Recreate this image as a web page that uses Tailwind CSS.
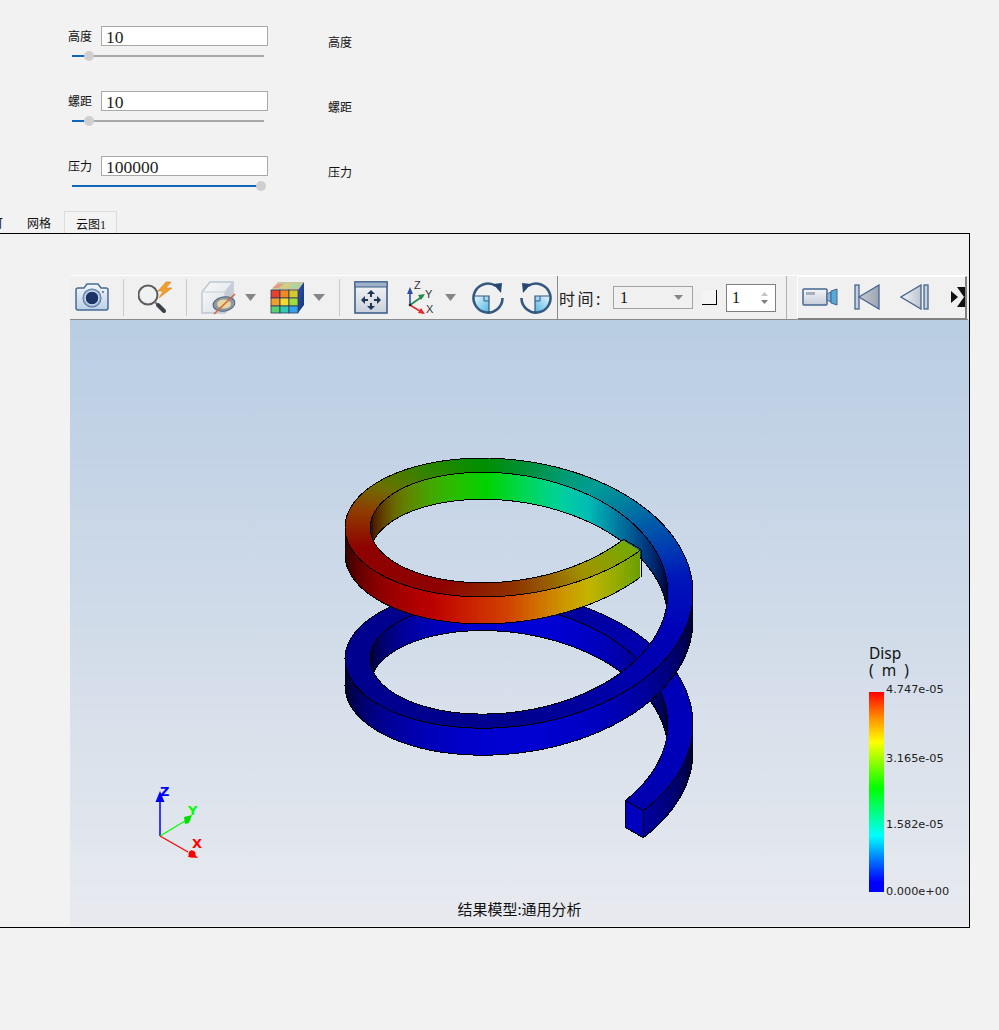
<!DOCTYPE html>
<html lang="zh">
<head>
<meta charset="utf-8">
<script src="https://cdn.jsdelivr.net/npm/@tailwindcss/browser@4"></script>
</head>
<body class="bg-[#f2f2f2]">
<div class="w-[999px] h-[1030px] overflow-hidden bg-[#f2f2f2] font-['Noto_Sans_CJK_SC','Liberation_Sans',sans-serif] text-[#111]">

  <!-- parameter form -->
  <div class="h-[211px] pt-[26px] pl-[68px] flex flex-col">
    <div class="h-[65px] flex">
      <div class="w-[200px]">
        <div class="flex items-center h-[20px]">
          <span class="w-[33px] text-[12px] leading-[20px]">高度</span>
          <div class="w-[167px] h-[20px] bg-white border border-[#a9a9a9] pl-[4px] font-['Liberation_Serif',serif] text-[17.500px] leading-[20px] text-[#222]">10</div>
        </div>
        <div class="relative mt-[8px] ml-[4px] w-[192px] h-[4px]">
          <div class="absolute left-0 top-[1px] w-[192px] h-[2px] bg-[#a9a9a9]"></div>
          <div class="absolute left-0 top-[1px] w-[14px] h-[2px] bg-[#0f67b8]"></div>
          <div class="absolute left-[12px] -top-[3px] w-[10px] h-[10px] rounded-full bg-[#cfcfcf]"></div>
        </div>
      </div>
      <span class="ml-[60px] mt-[6px] text-[12px] leading-[20px]">高度</span>
    </div>
    <div class="h-[65px] flex">
      <div class="w-[200px]">
        <div class="flex items-center h-[20px]">
          <span class="w-[33px] text-[12px] leading-[20px]">螺距</span>
          <div class="w-[167px] h-[20px] bg-white border border-[#a9a9a9] pl-[4px] font-['Liberation_Serif',serif] text-[17.500px] leading-[20px] text-[#222]">10</div>
        </div>
        <div class="relative mt-[8px] ml-[4px] w-[192px] h-[4px]">
          <div class="absolute left-0 top-[1px] w-[192px] h-[2px] bg-[#a9a9a9]"></div>
          <div class="absolute left-0 top-[1px] w-[14px] h-[2px] bg-[#0f67b8]"></div>
          <div class="absolute left-[12px] -top-[3px] w-[10px] h-[10px] rounded-full bg-[#cfcfcf]"></div>
        </div>
      </div>
      <span class="ml-[60px] mt-[6px] text-[12px] leading-[20px]">螺距</span>
    </div>
    <div class="h-[55px] flex">
      <div class="w-[200px]">
        <div class="flex items-center h-[20px]">
          <span class="w-[33px] text-[12px] leading-[20px]">压力</span>
          <div class="w-[167px] h-[20px] bg-white border border-[#a9a9a9] pl-[4px] font-['Liberation_Serif',serif] text-[17.500px] leading-[20px] text-[#222]">100000</div>
        </div>
        <div class="relative mt-[8px] ml-[4px] w-[192px] h-[4px]">
          <div class="absolute left-0 top-[1px] w-[186px] h-[2px] bg-[#0f67b8]"></div>
          <div class="absolute left-[184px] -top-[3px] w-[10px] h-[10px] rounded-full bg-[#cfcfcf]"></div>
        </div>
      </div>
      <span class="ml-[60px] mt-[6px] text-[12px] leading-[20px]">压力</span>
    </div>
  </div>

  <!-- tabs -->
  <div class="h-[22px] flex items-end">
    <span class="-ml-[9px] w-[12px] h-[22px] text-[12px] leading-[24px] overflow-hidden">可</span>
    <span class="ml-[24px] w-[24px] h-[22px] text-[12px] leading-[24px]">网格</span>
    <div class="ml-[13px] w-[53px] h-[22px] bg-[#f3f3f3] border border-b-0 border-[#dcdcdc] pl-[11px] text-[12px] leading-[23px]">云图<span class="font-['Liberation_Serif',serif]">1</span></div>
  </div>

  <!-- frame -->
  <div class="-ml-px w-[971px] h-[695px] border border-black pt-[41px] pl-[70px] bg-[#f2f2f2]">
    <!-- toolbar -->
    <div class="w-[898px] h-[45px] flex items-center border-t border-t-white border-b border-b-[#8a8a8a] bg-[#f0f0f0]">
      <svg class="ml-[5px] shrink-0" width="34" height="34" viewBox="0 0 34 34"><defs><linearGradient id="g1" x1="0" y1="0" x2="0" y2="1"><stop offset="0" stop-color="#f2f6fb"/><stop offset="1" stop-color="#bdd0e6"/></linearGradient><radialGradient id="g2"><stop offset="0" stop-color="#1d3566"/><stop offset=".62" stop-color="#1d3566"/><stop offset=".7" stop-color="#cfe0f2"/><stop offset=".85" stop-color="#8fa9c8"/><stop offset="1" stop-color="#3d5c86"/></radialGradient></defs><path d="M3 7h6l3-4h11l3 4h5a2 2 0 0 1 2 2v18a2 2 0 0 1-2 2H3a2 2 0 0 1-2-2V9a2 2 0 0 1 2-2z" fill="url(#g1)" stroke="#476a95" stroke-width="1.500"/><circle cx="17" cy="17" r="9.500" fill="url(#g2)"/><circle cx="28" cy="11" r="1" fill="#476a95"/></svg>
      <div class="ml-[14px] w-px h-[37px] bg-[#cbcbcb] shrink-0"></div>
      <svg class="ml-[14px] shrink-0" width="36" height="34" viewBox="0 0 36 34"><circle cx="10" cy="14" r="9.500" fill="#eff1f3" stroke="#5d5d5d" stroke-width="2"/><path d="M17 21l2 2" stroke="#777" stroke-width="2"/><path d="M20 24l6 6" stroke="#3a3f48" stroke-width="4" stroke-linecap="round"/><path d="M28 1L20 10h5l-4 7 13-10h-6l5-6z" fill="#f0a02e" stroke="#d98518" stroke-width=".6"/></svg>
      <div class="ml-[12px] w-px h-[37px] bg-[#cbcbcb] shrink-0"></div>
      <svg class="ml-[14px] shrink-0" width="35" height="34" viewBox="0 0 35 34"><defs><linearGradient id="g3" x1="0" y1="0" x2="1" y2="1"><stop offset="0" stop-color="#fafafa"/><stop offset="1" stop-color="#d7dde6"/></linearGradient></defs><path d="M1 11L9 1h23v22l-8 9H1z" fill="url(#g3)" stroke="#bcc6d2" stroke-width="1.400"/><path d="M1 11h23v21M24 11l8-10" fill="none" stroke="#c5ced9" stroke-width="1.200"/><path d="M24 11l8-10v22l-8 9z" fill="#c5ccd6"/><ellipse cx="23" cy="23" rx="11" ry="7" fill="#8d99a8" stroke="#52657d" stroke-width="1" transform="rotate(-10 23 23)"/><ellipse cx="23" cy="23" rx="7" ry="4.500" fill="#e8d7a0"/><path d="M13 33L34 13" stroke="#d8653a" stroke-width="1.600"/></svg>
      <svg class="ml-[9px] shrink-0" width="11" height="7" viewBox="0 0 11 7"><path d="M0 0h11L5.500 7z" fill="#858585"/></svg>
      <svg class="ml-[14px] shrink-0" width="35" height="34" viewBox="0 0 35 34"><defs><linearGradient id="g10" x1="0" y1="0" x2="1" y2="1"><stop offset="0" stop-color="#2c56a8"/><stop offset="1" stop-color="#16307a"/></linearGradient></defs><path d="M8 1h26l-6 8H1z" fill="#c8c89a"/><path d="M7.500 3h6l-5 4h-6z" fill="#e49a80"/><path d="M15 3h7l-5 4h-7z" fill="#d5cf7f"/><path d="M24 3h7l-4 4h-7z" fill="#a6d8a0"/><path d="M28 9l6-8v23l-6 8z" fill="url(#g10)"/><g stroke="#2a3a5c" stroke-width=".8"><rect x="1" y="9" width="9" height="8" fill="#e8402c"/><rect x="10" y="9" width="9" height="8" fill="#ef8a23"/><rect x="19" y="9" width="9" height="8" fill="#d8c830"/><rect x="1" y="17" width="9" height="8" fill="#f0a02a"/><rect x="10" y="17" width="9" height="8" fill="#f5d830"/><rect x="19" y="17" width="9" height="8" fill="#9fdc3c"/><rect x="1" y="25" width="9" height="7" fill="#58cf70"/><rect x="10" y="25" width="9" height="7" fill="#35c8b0"/><rect x="19" y="25" width="9" height="7" fill="#38a0e8"/></g></svg>
      <svg class="ml-[8px] shrink-0" width="12" height="7" viewBox="0 0 12 7"><path d="M0 0h12L6 7z" fill="#858585"/></svg>
      <div class="ml-[14px] w-px h-[37px] bg-[#cbcbcb] shrink-0"></div>
      <svg class="ml-[14px] shrink-0" width="34" height="34" viewBox="0 0 34 34"><defs><linearGradient id="g4" x1="0" y1="0" x2="0" y2="1"><stop offset="0" stop-color="#f6f6f8"/><stop offset="1" stop-color="#c9d0dc"/></linearGradient></defs><rect x="1" y="1" width="32" height="31" fill="url(#g4)" stroke="#3e5f88" stroke-width="1.600"/><rect x="1" y="1" width="32" height="5" fill="#9fb2cb" stroke="#3e5f88" stroke-width="1"/><g fill="#20354f"><path d="M17 9l4 4h-3v3h-2v-3h-3z"/><path d="M17 29l4-4h-3v-3h-2v3h-3z"/><path d="M7 19l4-4v3h3v2h-3v3z"/><path d="M27 19l-4-4v3h-3v2h3v3z"/></g></svg>
      <svg class="ml-[16px] shrink-0" width="34" height="34" viewBox="0 0 34 34"><path d="M6 24V8" stroke="#2d4fa3" stroke-width="1.600"/><path d="M6 6l3 7H3z" fill="#2d4fa3"/><path d="M6 24l13-9" stroke="#1f8a4a" stroke-width="1.600"/><path d="M21 13l-7 1 3 5z" fill="#1f8a4a"/><path d="M6 24l13 8" stroke="#df2b2b" stroke-width="1.600"/><path d="M21 33l-7-1 3-5z" fill="#df2b2b"/><circle cx="6" cy="24" r="1.300" fill="#222"/><text x="10" y="8" font-family="Liberation Sans" font-size="11" fill="#333">Z</text><text x="21" y="17" font-family="Liberation Sans" font-size="11" fill="#333">Y</text><text x="22" y="32" font-family="Liberation Sans" font-size="11" fill="#333">X</text></svg>
      <svg class="ml-[7px] shrink-0" width="11" height="7" viewBox="0 0 11 7"><path d="M0 0h11L5.500 7z" fill="#858585"/></svg>
      <svg class="ml-[15px] shrink-0" width="34" height="34" viewBox="0 0 34 34"><defs><linearGradient id="g5" x1="0" y1="0" x2="1" y2="1"><stop offset="0" stop-color="#eaf6fd"/><stop offset="1" stop-color="#4fb6e4"/></linearGradient></defs><path d="M2.500 15H18V31.500A14.500 14.500 0 0 1 2.500 15z" fill="url(#g5)"/><path d="M25 5A14.500 14.500 0 1 0 31.500 17" fill="none" stroke="#35587f" stroke-width="2.600"/><path d="M2.500 15H18V31" fill="none" stroke="#35587f" stroke-width="1.200"/><path d="M13 15v5h5" fill="none" stroke="#35587f" stroke-width="1"/><path d="M22 3l9-1-1 10z" fill="#26486f"/></svg>
      <svg class="ml-[14px] shrink-0" width="34" height="34" viewBox="0 0 34 34"><g transform="matrix(-1 0 0 1 34 0)"><path d="M2.500 15H18V31.500A14.500 14.500 0 0 1 2.500 15z" fill="url(#g5)"/><path d="M25 5A14.500 14.500 0 1 0 31.500 17" fill="none" stroke="#35587f" stroke-width="2.600"/><path d="M2.500 15H18V31" fill="none" stroke="#35587f" stroke-width="1.200"/><path d="M13 15v5h5" fill="none" stroke="#35587f" stroke-width="1"/><path d="M22 3l9-1-1 10z" fill="#26486f"/></g></svg>
      <div class="ml-[4px] w-px h-[43px] bg-[#8a8a8a] shrink-0"></div>
      <span class="ml-[1px] w-[54px] shrink-0 text-[16px] tracking-[2.500px] leading-[20px] text-[#222]">时间:</span>
      <div class="w-[80px] h-[23px] shrink-0 border border-[#a3a3a3] flex items-center justify-between pl-[6px] pr-[9px] font-['Liberation_Serif',serif] text-[16px]">1<svg width="9" height="5" viewBox="0 0 9 5"><path d="M0 0h9L4.500 5z" fill="#858585"/></svg></div>
      <div class="ml-[9px] w-[15px] h-[15px] shrink-0 border-r-[1.500px] border-b-[1.500px] border-r-black border-b-black bg-[#f4f4f4]"></div>
      <div class="ml-[9px] w-[50px] h-[28px] shrink-0 bg-white border border-[#808080] flex items-center justify-between pl-[5px] pr-[7px] font-['Liberation_Serif',serif] text-[16px]">1<span class="flex flex-col gap-[4px]"><svg width="7" height="4" viewBox="0 0 7 4"><path d="M0 4h7L3.500 0z" fill="#c4c4c4"/></svg><svg width="7" height="4" viewBox="0 0 7 4"><path d="M0 0h7L3.500 4z" fill="#808080"/></svg></span></div>
      <div class="ml-[10px] w-px h-[43px] bg-[#b0b0b0] shrink-0"></div>
      <div class="ml-[10px] w-[170px] h-[44px] shrink-0 flex items-center border-t border-l border-white border-r-2 border-b-2 border-r-[#808080] border-b-[#808080] overflow-hidden">
        <svg class="ml-[4px] shrink-0" width="36" height="20" viewBox="0 0 36 20"><defs><linearGradient id="g7" x1="0" y1="0" x2="0" y2="1"><stop offset="0" stop-color="#f4f5f8"/><stop offset="1" stop-color="#c6ccd8"/></linearGradient></defs><rect x="1" y="2" width="24" height="16" rx="1" fill="url(#g7)" stroke="#47658e" stroke-width="1.500"/><rect x="4" y="5" width="9" height="3" fill="#a6b0bc"/><path d="M25 7l4-2v10l-4-2z" fill="#8ab6d8" stroke="#47658e"/><path d="M29 4l6-2v16l-6-2z" fill="#57a9d8" stroke="#47658e"/></svg>
        <svg class="ml-[16px] shrink-0" width="27" height="26" viewBox="0 0 27 26"><defs><linearGradient id="g8" x1="0" y1="0" x2="1" y2="0"><stop offset="0" stop-color="#c8ccd4"/><stop offset="1" stop-color="#9aa4b2"/></linearGradient></defs><rect x="1" y="1" width="4" height="24" fill="#c6d0de" stroke="#47658e" stroke-width="1.300"/><path d="M25 1v24L5 13z" fill="url(#g8)" stroke="#47658e" stroke-width="1.300"/></svg>
        <svg class="ml-[19px] shrink-0" width="30" height="26" viewBox="0 0 30 26"><defs><linearGradient id="g9" x1="0" y1="0" x2="1" y2="0"><stop offset="0" stop-color="#f4f5f7"/><stop offset="1" stop-color="#bcc4d0"/></linearGradient></defs><path d="M21 1v24L1 13z" fill="url(#g9)" stroke="#47658e" stroke-width="1.300"/><rect x="24" y="1" width="4" height="24" fill="#c6d0de" stroke="#47658e" stroke-width="1.300"/></svg>
        <svg class="ml-[21px] shrink-0" width="15" height="22" viewBox="0 0 15 22"><path d="M0 5l7 6-7 6z" fill="#111"/><path d="M6 1h9v9l-2 1z" fill="#111"/><path d="M13 11h2v10H6z" fill="#111"/></svg>
      </div>
    </div>

    <!-- 3D viewport -->
    <div class="relative w-[899px] h-[606px] bg-linear-to-b from-[#b9cde3] to-[#e8eaef]">
      <svg id="scene" class="absolute inset-0" width="899" height="606" viewBox="70 320 899 606" shape-rendering="crispEdges"></svg>
      <svg class="absolute inset-0" width="899" height="606" viewBox="70 320 899 606">
        <path d="M160 836V800" stroke="#0000ff" stroke-width="1.500"/><path d="M160 791l4.500 11h-9z" fill="#0000ff"/>
        <path d="M160 836l25-15" stroke="#00ff00" stroke-width="1.300"/><path d="M184 817l8-2-3 8-4 1z" fill="#00e000"/>
        <path d="M160 836l28 16" stroke="#ff0000" stroke-width="1.300"/><path d="M198 858l-10-1 3-7z" fill="#ff0000"/><circle cx="192" cy="854" r="3.500" fill="#ff0000"/>
        <text x="160" y="796" font-family="DejaVu Sans" font-weight="700" font-size="13" fill="#0000ff">Z</text>
        <text x="188" y="815" font-family="DejaVu Sans" font-weight="700" font-size="13" fill="#00ff00">Y</text>
        <text x="192" y="848" font-family="DejaVu Sans" font-weight="700" font-size="13" fill="#ff0000">X</text>
      </svg>
      <div class="absolute left-[799px] top-[325px] text-[15.500px] leading-[17px] font-['Noto_Sans','Liberation_Sans',sans-serif] text-[#111]">Disp<br><span class="whitespace-pre">(  m  )</span></div>
      <div class="absolute left-[799px] top-[372px] w-[15px] h-[200px] bg-[linear-gradient(to_bottom,#ff0000_0%,#ff9000_13%,#ffff00_25%,#00ff00_48%,#00ffff_72%,#0080ff_83%,#0000ff_95%)]"></div>
      <span class="absolute left-[816px] top-[363px] text-[11.300px] leading-[14px] font-['DejaVu_Sans',sans-serif] text-[#222]">4.747e-05</span>
      <span class="absolute left-[816px] top-[432px] text-[11.300px] leading-[14px] font-['DejaVu_Sans',sans-serif] text-[#222]">3.165e-05</span>
      <span class="absolute left-[816px] top-[498px] text-[11.300px] leading-[14px] font-['DejaVu_Sans',sans-serif] text-[#222]">1.582e-05</span>
      <span class="absolute left-[816px] top-[565px] text-[11.300px] leading-[14px] font-['DejaVu_Sans',sans-serif] text-[#222]">0.000e+00</span>
      <div class="absolute left-0 right-0 top-[578px] text-center text-[15px] leading-[22px] text-[#111]">结果模型:通用分析</div>
    </div>
  </div>
</div>

<script>
(function(){
  var A=174,B=100,K=20.9,CX=519,Y0=527.5,R=0.855,H=27;
  var stops=[[-20,0,0,255],[-3.5,0,0,255],[-3.0,0,30,255],[-2.5,0,130,240],[-2.05,0,245,235],[-1.85,0,255,190],[-1.35,0,255,0],[-0.95,90,235,0],[-0.6,190,200,0],[-0.25,255,110,0],[0.3,255,0,0],[1.05,255,0,0],[1.5,255,80,0],[1.98,255,235,0],[2.35,165,250,0]];
  function col(t){
    for(var i=1;i<stops.length;i++){
      if(t<=stops[i][0]){
        var a=stops[i-1],b=stops[i],f=(t-a[0])/(b[0]-a[0]);
        return [a[1]+(b[1]-a[1])*f,a[2]+(b[2]-a[2])*f,a[3]+(b[3]-a[3])*f];
      }
    }
    return stops[stops.length-1].slice(1);
  }
  function css(c,s){return 'rgb('+Math.round(c[0]*s)+','+Math.round(c[1]*s)+','+Math.round(c[2]*s)+')';}
  function P(t,r,d){return [CX-A*r*Math.cos(t),Y0-K*t+B*r*Math.sin(t)+d];}
  function pt(p){return p[0].toFixed(2)+','+p[1].toFixed(2);}
  function poly(a,f){return '<polygon points="'+a.map(pt).join(' ')+'" fill="'+f+'"/>';}
  function line(a){return '<polyline points="'+a.map(pt).join(' ')+'" fill="none" stroke="#000" stroke-width="1"/>';}
  var T0=-10.2,T1=2.35,STEP=0.02,CH=10,chunks=[],n=Math.round((T1-T0)/STEP);
  for(var i=0;i<n;i+=CH){
    var walls='',tops='',lo=[],li=[],lbo=[],lbi=[],mid=T0+(i+CH/2)*STEP;
    for(var j=i;j<Math.min(i+CH,n);j++){
      var a=T0+j*STEP,b=a+STEP,m=(a+b)/2,s=Math.sin(m),c=col(m);
      var oa=P(a,1,0),ob=P(b,1,0),ia=P(a,R,0),ib=P(b,R,0);
      if(s>-0.06){
        walls+=poly([oa,ob,P(b,1,H),P(a,1,H)],css(c,0.04+0.78*Math.pow(Math.max(s,0),0.85)));
        lbo.push(P(a,1,H));
      }
      if(s<0.06){
        walls+=poly([ia,ib,P(b,R,H),P(a,R,H)],css(c,0.04+0.8*Math.pow(Math.max(-s,0),0.8)));
        lbi.push(P(a,R,H));
      }
      tops+=poly([oa,ob,ib,ia],css(c,0.56+0.17*Math.max(0,-Math.cos(m))));
      lo.push(oa);li.push(ia);
    }
    var e=Math.min(i+CH,n),t=T0+e*STEP;
    lo.push(P(t,1,0));li.push(P(t,R,0));
    if(lbo.length)lbo.push(P(t,1,H));
    if(lbi.length)lbi.push(P(t,R,H));
    var html=walls+tops+line(lo)+line(li);
    if(lbo.length>1)html+=line(lbo);
    if(lbi.length>1)html+=line(lbi);
    if(i===0){
      var f=[P(T0,1,0),P(T0,R,0),P(T0,R,H),P(T0,1,H)];
      html+=poly(f,'rgb(0,0,190)')+line(f.concat([f[0]]));
    }
    if(e>=n){
      html+=line([P(T1,1,0),P(T1,R,0)])+line([P(T1,1,0),P(T1,1,H)]);
    }
    chunks.push({d:142.5*Math.sin(mid)+14.7*mid,h:html});
  }
  chunks.sort(function(x,y){return x.d-y.d;});
  document.getElementById('scene').innerHTML=chunks.map(function(x){return x.h;}).join('');
})();
</script>
</body>
</html>
